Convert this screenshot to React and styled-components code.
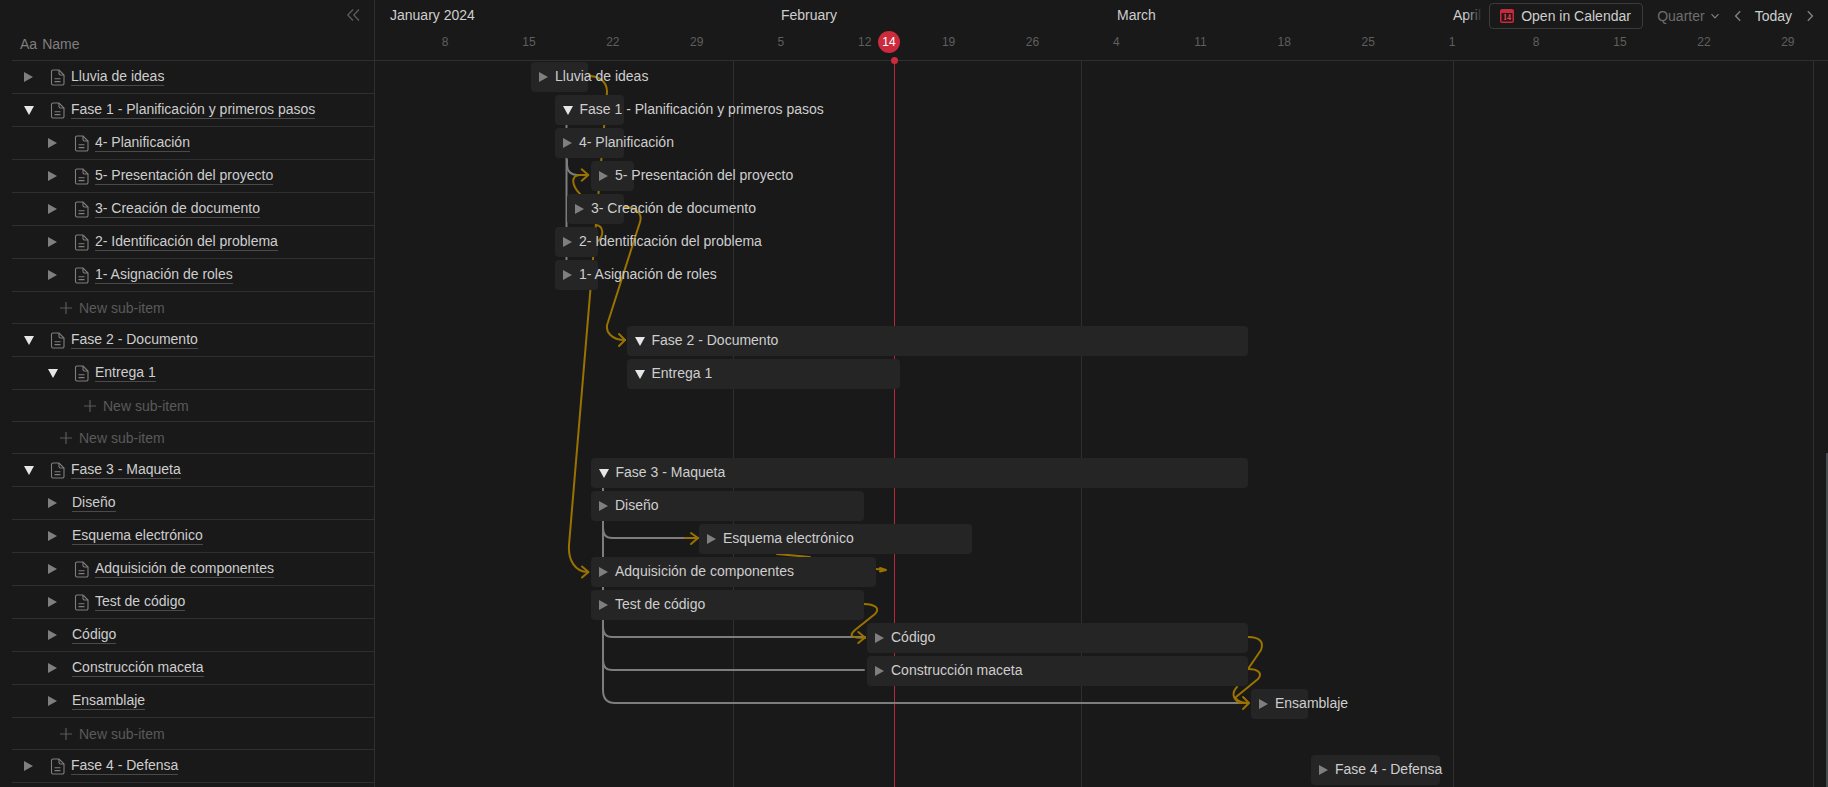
import React from "react"
import styled, { createGlobalStyle } from "styled-components"

const SIDEBAR_WIDTH = 375

const GlobalStyle = createGlobalStyle`
  html, body {
    margin: 0;
    padding: 0;
    height: 100%;
    background: #191919;
  }
  body {
    font-family: "Liberation Sans", Arial, sans-serif;
    font-size: 14px;
    color: #cecece;
    overflow: hidden;
  }
`

const Page = styled.div`
  display: flex;
  height: 787px;
  overflow: hidden;
  background: #191919;
  position: relative;
`

const Sidebar = styled.aside`
  flex: 0 0 ${SIDEBAR_WIDTH}px;
  box-sizing: border-box;
  padding-left: 12px;
  border-right: 1px solid #2f2f2f;
`

const SidebarHeader = styled.div`
  height: 61px;
  box-sizing: border-box;
  border-bottom: 1px solid #2f2f2f;
  display: flex;
  flex-direction: column;
`

const CollapseRow = styled.div`
  display: flex;
  justify-content: flex-end;
  padding: 9px 14px 0 0;
  height: 20px;
`

const NameColumn = styled.div`
  display: flex;
  gap: 5px;
  padding: 5px 0 0 8px;
  line-height: 20px;
  color: #7f7f7f;
`

const Row = styled.div`
  box-sizing: border-box;
  height: 33px;
  border-bottom: 1px solid #2f2f2f;
  display: flex;
  align-items: center;
  padding-left: ${p => p.$depth * 24 + 12}px;
`

const CaretSlot = styled.span`
  flex: 0 0 ${p => p.$width}px;
  display: flex;
  align-items: center;
`

const Caret = styled.span`
  display: block;
  flex: none;
  width: 0;
  height: 0;
  ${p =>
    p.$open
      ? `
    border-left: 5px solid transparent;
    border-right: 5px solid transparent;
    border-top: 9.5px solid #e6e6e6;
    margin-right: -0.5px;
  `
      : `
    border-top: 5px solid transparent;
    border-bottom: 5px solid transparent;
    border-left: 9px solid #7f7f7f;
  `}
`

const DocSlot = styled.span`
  flex: 0 0 21px;
  display: flex;
  align-items: center;
`

const RowLabel = styled.span`
  line-height: 17px;
  margin-top: -1px;
  border-bottom: 1px solid #4a4a4a;
  white-space: nowrap;
`

const AddRow = styled.div`
  box-sizing: border-box;
  height: 32px;
  border-bottom: 1px solid #2f2f2f;
  display: flex;
  align-items: center;
  padding-left: ${p => p.$depth * 24 + 24}px;
  gap: 7px;
  color: #5a5a5a;
  line-height: 20px;
`

const Timeline = styled.main`
  flex: 1;
  min-width: 0;
  position: relative;
`

const TimelineHeader = styled.div`
  height: 61px;
  box-sizing: border-box;
  border-bottom: 1px solid #2f2f2f;
  position: relative;
`

const Month = styled.span`
  position: absolute;
  top: 6px;
  left: ${p => p.$x - SIDEBAR_WIDTH}px;
  line-height: 18px;
  white-space: nowrap;
`

const Day = styled.span`
  position: absolute;
  top: 35px;
  left: ${p => p.$x - SIDEBAR_WIDTH - 20}px;
  width: 40px;
  text-align: center;
  font-size: 12px;
  line-height: 14px;
  color: #5f5f5f;
`

const TodayBadge = styled.span`
  position: absolute;
  top: 31px;
  left: ${889 - SIDEBAR_WIDTH - 11}px;
  width: 22px;
  height: 22px;
  border-radius: 50%;
  background: #cb2b3c;
  color: #fff;
  font-size: 12px;
  line-height: 22px;
  text-align: center;
  z-index: 2;
`

const TodayDot = styled.span`
  position: absolute;
  top: 57px;
  left: ${894 - SIDEBAR_WIDTH - 3.5}px;
  width: 7px;
  height: 7px;
  border-radius: 50%;
  background: #cb2b3c;
  z-index: 2;
`

const Controls = styled.div`
  position: absolute;
  top: 3px;
  right: 0;
  height: 26px;
  display: flex;
  align-items: center;
  padding-left: 24px;
  padding-right: 12px;
  background: linear-gradient(to right, rgba(25, 25, 25, 0), #191919 18px);
  z-index: 3;
`

const CalendarButton = styled.div`
  box-sizing: border-box;
  width: 154px;
  height: 26px;
  display: flex;
  align-items: center;
  gap: 7px;
  padding-left: 10px;
  border: 1px solid #3a3a3a;
  border-radius: 4px;
  white-space: nowrap;
`

const ViewPicker = styled.div`
  display: flex;
  align-items: center;
  gap: 5px;
  margin-left: 14px;
  color: #6e6e6e;
`

const TodayNav = styled.div`
  display: flex;
  align-items: center;
  margin-left: 12px;
`

const TodayLabel = styled.span`
  margin: 0 12px 0 11px;
`

const Body = styled.div`
  position: relative;
  height: 726px;
`

const GridLine = styled.div`
  position: absolute;
  top: 0;
  bottom: 0;
  left: ${p => p.$x - SIDEBAR_WIDTH}px;
  width: 1px;
  background: ${p => (p.$today ? "#b8283a" : "#2f2f2f")};
`

const Arrows = styled.svg`
  position: absolute;
  top: 0;
  left: 0;
  width: 1453px;
  height: 726px;
  pointer-events: none;
`

const Lanes = styled.div`
  position: relative;
  padding-top: 1px;
  display: flex;
  flex-direction: column;
`

const Lane = styled.div`
  height: 33px;
  display: flex;
  align-items: flex-start;
`

const Bar = styled.div`
  box-sizing: border-box;
  margin-left: ${p => p.$x - SIDEBAR_WIDTH}px;
  width: ${p => p.$w}px;
  height: 30px;
  padding-left: 8px;
  display: flex;
  align-items: center;
  gap: 7px;
  background: #252525;
  border-radius: 4px;
  white-space: nowrap;
`

const BarLabel = styled.span`
  line-height: 20px;
  margin-top: -2px;
`

const Scrollbar = styled.div`
  position: absolute;
  right: 0;
  top: 453px;
  bottom: 0;
  width: 2px;
  background: #474b4f;
`

const DocIcon = () => (
  <svg width="15" height="17" viewBox="0 0 15 17" fill="none" stroke="#7f7f7f" strokeWidth="1.1">
    <path d="M3 1h6l5 5v8.5a1.5 1.5 0 0 1-1.5 1.5H3a1.5 1.5 0 0 1-1.5-1.5v-12A1.5 1.5 0 0 1 3 1z" />
    <path d="M9 1v3.5A1.5 1.5 0 0 0 10.5 6H14" />
    <path d="M4.5 9.8h6M4.5 12.6h6" />
  </svg>
)

const PlusIcon = () => (
  <svg width="12" height="12" viewBox="0 0 12 12" stroke="#5a5a5a" strokeWidth="1.2">
    <path d="M6 0v12M0 6h12" />
  </svg>
)

const CollapseIcon = () => (
  <svg width="13" height="12" viewBox="0 0 13 12" fill="none" stroke="#5f5f5f" strokeWidth="1.2">
    <path d="M6 .5L.8 6 6 11.5M12 .5L6.8 6l5.2 5.5" />
  </svg>
)

const CalendarIcon = () => (
  <svg width="14" height="14" viewBox="0 0 14 14">
    <rect width="14" height="14" rx="2" fill="#c62a3b" />
    <rect x="1.5" y="4" width="11" height="8.5" fill="#2a1518" />
    <text x="7" y="11.2" textAnchor="middle" fontSize="8" fontWeight="700" fontFamily="Liberation Serif, serif" fill="#e04a58">
      14
    </text>
  </svg>
)

const Chevron = ({ dir, color = "#7f7f7f", size = 10 }) => (
  <svg width={size} height={size} viewBox="0 0 10 10" fill="none" stroke={color} strokeWidth="1.2">
    {dir === "down" && <path d="M1.5 3.2L5 6.8l3.5-3.6" />}
    {dir === "left" && <path d="M6.8 1L3 5l3.8 4" />}
    {dir === "right" && <path d="M3.2 1L7 5 3.2 9" />}
  </svg>
)

const rows = [
  { name: "Lluvia de ideas", depth: 0, doc: true },
  { name: "Fase 1 - Planificación y primeros pasos", depth: 0, doc: true, open: true },
  { name: "4- Planificación", depth: 1, doc: true },
  { name: "5- Presentación del proyecto", depth: 1, doc: true },
  { name: "3- Creación de documento", depth: 1, doc: true },
  { name: "2- Identificación del problema", depth: 1, doc: true },
  { name: "1- Asignación de roles", depth: 1, doc: true },
  { add: true, depth: 1 },
  { name: "Fase 2 - Documento", depth: 0, doc: true, open: true },
  { name: "Entrega 1", depth: 1, doc: true, open: true },
  { add: true, depth: 2 },
  { add: true, depth: 1 },
  { name: "Fase 3 - Maqueta", depth: 0, doc: true, open: true },
  { name: "Diseño", depth: 1 },
  { name: "Esquema electrónico", depth: 1 },
  { name: "Adquisición de componentes", depth: 1, doc: true },
  { name: "Test de código", depth: 1, doc: true },
  { name: "Código", depth: 1 },
  { name: "Construcción maceta", depth: 1 },
  { name: "Ensamblaje", depth: 1 },
  { add: true, depth: 1 },
  { name: "Fase 4 - Defensa", depth: 0, doc: true },
]

// bars per lane, x in page pixels, null for the lanes of "New sub-item"
const bars = [
  { name: "Lluvia de ideas", x: 531, w: 57 },
  { name: "Fase 1 - Planificación y primeros pasos", x: 555, w: 69, open: true },
  { name: "4- Planificación", x: 555, w: 69 },
  { name: "5- Presentación del proyecto", x: 591, w: 43 },
  { name: "3- Creación de documento", x: 567, w: 57 },
  { name: "2- Identificación del problema", x: 555, w: 43 },
  { name: "1- Asignación de roles", x: 555, w: 43 },
  null,
  { name: "Fase 2 - Documento", x: 627, w: 621, open: true },
  { name: "Entrega 1", x: 627, w: 273, open: true },
  null,
  null,
  { name: "Fase 3 - Maqueta", x: 591, w: 657, open: true },
  { name: "Diseño", x: 591, w: 273 },
  { name: "Esquema electrónico", x: 699, w: 273 },
  { name: "Adquisición de componentes", x: 591, w: 285 },
  { name: "Test de código", x: 591, w: 273 },
  { name: "Código", x: 867, w: 381 },
  { name: "Construcción maceta", x: 867, w: 381 },
  { name: "Ensamblaje", x: 1251, w: 57 },
  null,
  { name: "Fase 4 - Defensa", x: 1311, w: 129 },
]

const days = ["8", "15", "22", "29", "5", "12", "19", "26", "4", "11", "18", "25", "1", "8", "15", "22", "29"]

const greyPaths = [
  "M566.5 122V262",
  "M567 160V165C567 171 571 175 577 175H588",
  "M603 486V690C603 698 607 703 615 703H1240",
  "M603 528C603 534 606 538 612 538H698",
  "M603 627C603 633 606 637 612 637H865",
  "M603 660C603 666 606 670 612 670H864",
]

const goldPaths = [
  "M588 76C600 76 607 82 607 92L569 545C568 560 575 572 588 572",
  "M582 566.5L588.5 572L582 577.5",
  "M580 194C572 186 570 175 580 175H588",
  "M581.7 169.3L588.3 175L581.7 180.7",
  "M624 207C634 207 643 212 640 222L608 322C604 332 612 340 625 340",
  "M619 334L625 340L619 346",
  "M596 225C604 226 604 236 598 241",
  "M685 538H698M691 533L698 538L691 544",
  "M777 554L810 557",
  "M876 569L886 570M880 568L886 570L880 571.5",
  "M864 604C874 604 881 608 875 614L855 630C848 636 852 638 865 638",
  "M858.3 632L865 637.5L858.3 643",
  "M1248 637C1260 637 1264 642 1261 650L1248 669",
  "M1248 669C1258 669 1263 673 1258 679L1236 697C1235 698 1238 703 1248 703",
  "M1237 687C1232 692 1232 699 1240 703H1248",
  "M1243 697L1249 703L1243 709",
]

const App = () => (
  <Page>
    <GlobalStyle />
    <Sidebar>
      <SidebarHeader>
        <CollapseRow>
          <CollapseIcon />
        </CollapseRow>
        <NameColumn>
          <span>Aa</span>
          <span>Name</span>
        </NameColumn>
      </SidebarHeader>
      {rows.map((row, i) =>
        row.add ? (
          <AddRow key={i} $depth={row.depth}>
            <PlusIcon />
            <span>New sub-item</span>
          </AddRow>
        ) : (
          <Row key={i} $depth={row.depth}>
            <CaretSlot $width={row.doc ? 26 : 24}>
              <Caret $open={row.open} />
            </CaretSlot>
            {row.doc && (
              <DocSlot>
                <DocIcon />
              </DocSlot>
            )}
            <RowLabel>{row.name}</RowLabel>
          </Row>
        )
      )}
    </Sidebar>

    <Timeline>
      <TimelineHeader>
        <Month $x={390}>January 2024</Month>
        <Month $x={781}>February</Month>
        <Month $x={1117}>March</Month>
        <Month $x={1453}>April</Month>
        {days.map((d, i) => (
          <Day key={i} $x={445 + i * 83.93}>
            {d}
          </Day>
        ))}
        <TodayBadge>14</TodayBadge>
        <TodayDot />
        <Controls>
          <CalendarButton>
            <CalendarIcon />
            Open in Calendar
          </CalendarButton>
          <ViewPicker>
            Quarter
            <Chevron dir="down" />
          </ViewPicker>
          <TodayNav>
            <Chevron dir="left" size={12} />
            <TodayLabel>Today</TodayLabel>
            <Chevron dir="right" size={12} />
          </TodayNav>
        </Controls>
      </TimelineHeader>

      <Body>
        <GridLine $x={733} />
        <GridLine $x={1081} />
        <GridLine $x={1453} />
        <GridLine $x={1813} />
        <GridLine $x={894} $today />
        <Arrows viewBox={`${SIDEBAR_WIDTH} 61 1453 726`} fill="none" strokeLinecap="round" strokeLinejoin="round">
          {greyPaths.map(d => (
            <path key={d} d={d} stroke="#7d7d7d" strokeWidth="2" />
          ))}
          {goldPaths.map(d => (
            <path key={d} d={d} stroke="#9a7200" strokeWidth="2" />
          ))}
        </Arrows>
        <Lanes>
          {bars.map((bar, i) => (
            <Lane key={i}>
              {bar && (
                <Bar $x={bar.x} $w={bar.w}>
                  <Caret $open={bar.open} />
                  <BarLabel>{bar.name}</BarLabel>
                </Bar>
              )}
            </Lane>
          ))}
        </Lanes>
      </Body>
    </Timeline>
    <Scrollbar />
  </Page>
)

export default App
